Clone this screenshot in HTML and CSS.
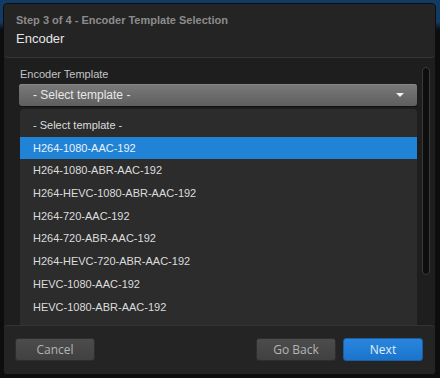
FILE: index.html
```html
<!DOCTYPE html>
<html lang="en">
<head>
<meta charset="UTF-8">
<meta name="viewport" content="width=device-width, initial-scale=1.0">
<title>Encoder Template Selection</title>
<link rel="stylesheet" href="styles.css">
</head>
<body>
<div class="modal">
<div class="modal-header">
<div class="step">Step 3 of 4 - Encoder Template Selection</div>
<div class="title">Encoder</div>
</div>
<div class="modal-body">
<div class="form-area">
<label class="field-label">Encoder Template</label>
<div class="select">
<span>- Select template -</span>
<span class="caret"></span>
</div>
<ul class="options">
<li>- Select template -</li>
<li class="active">H264-1080-AAC-192</li>
<li>H264-1080-ABR-AAC-192</li>
<li>H264-HEVC-1080-ABR-AAC-192</li>
<li>H264-720-AAC-192</li>
<li>H264-720-ABR-AAC-192</li>
<li>H264-HEVC-720-ABR-AAC-192</li>
<li>HEVC-1080-AAC-192</li>
<li>HEVC-1080-ABR-AAC-192</li>
</ul>
</div>
<div class="scrollbar"></div>
</div>
<div class="modal-footer">
<button class="btn">Cancel</button>
<div class="right">
<button class="btn">Go Back</button>
<button class="btn primary">Next</button>
</div>
</div>
</div>
</body>
</html>
```

FILE: styles.css
```css
html, body {
margin: 0;
height: 100%;
}

body {
background: linear-gradient(#123b63 0, #123b63 22px, #0c0d0f 30px);
font-family: "Liberation Sans", Arial, sans-serif;
padding: 3px 4px 3px 3px;
box-sizing: border-box;
overflow: hidden;
}

.modal {
height: 372px;
background: #1e1e1e;
border: 1px solid #0e0e0e;
border-radius: 4px;
box-sizing: border-box;
display: flex;
flex-direction: column;
overflow: hidden;
}

.modal-header {
height: 54px;
background: #242424;
border-bottom: 1px solid #363636;
border-radius: 0 0 4px 4px;
padding: 9px 12px 0 12px;
box-sizing: border-box;
}

.step {
color: #8c8c8c;
font-weight: bold;
font-size: 11px;
line-height: 14px;
}

.title {
color: #e6e6e6;
font-size: 13px;
line-height: 16px;
margin-top: 4px;
}

.modal-body {
flex: 1;
display: flex;
padding: 9px 2px 0 15px;
overflow: hidden;
}

.form-area {
flex: 1;
display: flex;
flex-direction: column;
}

.field-label {
color: #c4c4c4;
font-size: 11px;
line-height: 14px;
margin-left: 1px;
}

.select {
margin-top: 3px;
height: 22px;
border-radius: 3px;
background: linear-gradient(#7a7a7a, #5e5e5e);
box-shadow: inset 0 1px 0 #878787, 0 1px 1px #111;
display: flex;
align-items: center;
justify-content: space-between;
padding: 0 13px 0 14px;
color: #e8e8e8;
font-size: 12px;
}

.caret {
width: 0;
height: 0;
border-left: 4px solid transparent;
border-right: 4px solid transparent;
border-top: 4px solid #f2f2f2;
}

.options {
list-style: none;
margin: 3px 0 0 1px;
padding: 5px 0 0 0;
background: #2c2c2c;
border-radius: 4px 4px 0 0;
flex: 1;
overflow: hidden;
}

.options li {
height: 22.7px;
line-height: 22.7px;
padding-left: 13px;
color: #dcdcdc;
font-size: 11px;
}

.options li.active {
background: #2083d6;
color: #e8f1fb;
}

.scrollbar {
width: 6px;
height: 206px;
margin: 0 3px 0 5px;
background: #0e0e0e;
border: 1px solid #3a3a3a;
border-radius: 4px;
}

.modal-footer {
height: 49px;
background: #242424;
border-top: 1px solid #333;
border-radius: 4px 4px 0 0;
display: flex;
justify-content: space-between;
align-items: flex-start;
padding: 12px 12px 0 11px;
box-sizing: border-box;
}

.right {
display: flex;
gap: 7px;
}

.btn {
width: 80px;
height: 23px;
border: 1px solid #2e2e2e;
border-radius: 3px;
background: linear-gradient(#4c4c4c, #414141);
color: #b4b4b4;
font-family: "Open Sans", sans-serif;
font-size: 12px;
padding: 0;
}

.btn.primary {
background: linear-gradient(#2a86dc, #1a74cc);
border-color: #1a5ea8;
color: #e2eefa;
}
```
